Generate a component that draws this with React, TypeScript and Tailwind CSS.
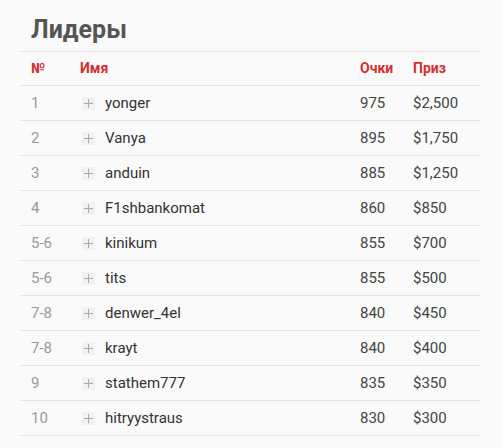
const leaders = [
  { rank: "1", name: "yonger", points: 975, prize: "$2,500" },
  { rank: "2", name: "Vanya", points: 895, prize: "$1,750" },
  { rank: "3", name: "anduin", points: 885, prize: "$1,250" },
  { rank: "4", name: "F1shbankomat", points: 860, prize: "$850" },
  { rank: "5-6", name: "kinikum", points: 855, prize: "$700" },
  { rank: "5-6", name: "tits", points: 855, prize: "$500" },
  { rank: "7-8", name: "denwer_4el", points: 840, prize: "$450" },
  { rank: "7-8", name: "krayt", points: 840, prize: "$400" },
  { rank: "9", name: "stathem777", points: 835, prize: "$350" },
  { rank: "10", name: "hitryystraus", points: 830, prize: "$300" },
];

const row = "grid h-[35px] grid-cols-[59px_280px_53px_1fr] items-center border-b border-b-[#e2e2e2]";

export default function App() {
  return (
    <div className="min-h-[448px] w-[502px] bg-[#fafafa] pl-[21px] pt-[14px] font-['Roboto',sans-serif]">
      <div className="w-[459px]">
        <h2 className="mb-[5px] pl-[10px] text-[25px] leading-[32px] font-bold text-[#555]">Лидеры</h2>

        <div className={`${row} border-t border-t-[#e2e2e2] text-[14px] font-bold text-[#d32f2f]`}>
          <span className="pl-[10px]">№</span>
          <span>Имя</span>
          <span>Очки</span>
          <span>Приз</span>
        </div>

        {leaders.map((l, i) => (
          <div key={i} className={`${row} text-[15px]`}>
            <span className="pl-[10px] text-[#999]">{l.rank}</span>
            <span className="flex items-center text-[#333]">
              <span className="ml-[2px] mr-[10px] flex h-[13px] w-[13px] items-center justify-center bg-[#f1f1f1]">
                <svg width="9" height="9" viewBox="0 0 9 9">
                  <path d="M4.5 0v9M0 4.5h9" stroke="#aaa" strokeWidth="1" />
                </svg>
              </span>
              {l.name}
            </span>
            <span className="text-[#444]">{l.points}</span>
            <span className="text-[#444]">{l.prize}</span>
          </div>
        ))}
      </div>
    </div>
  );
}
